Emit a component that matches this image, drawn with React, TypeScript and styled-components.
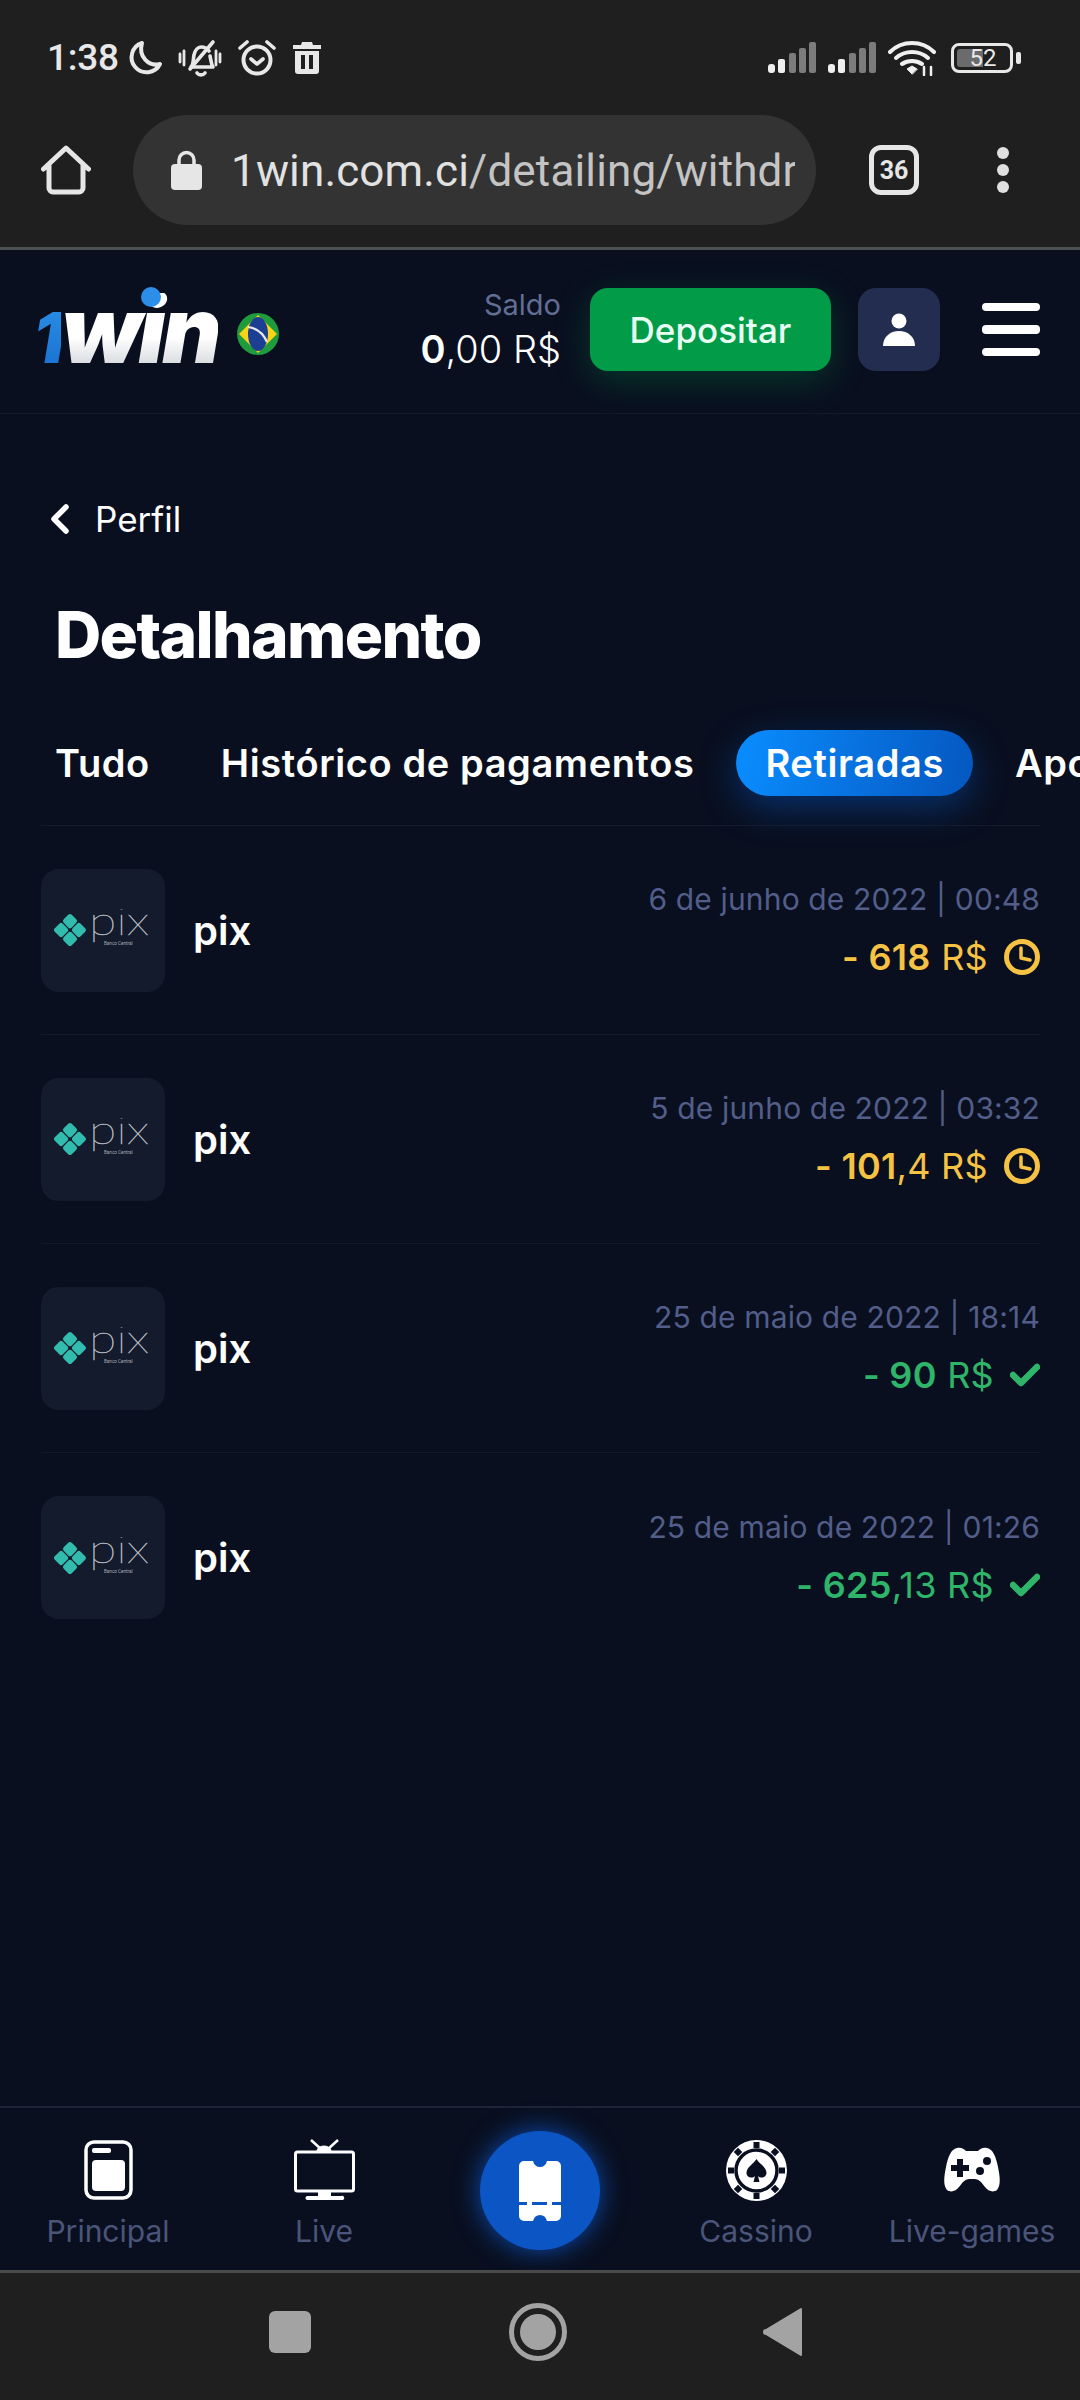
import styled, { createGlobalStyle } from "styled-components";

const GlobalStyle = createGlobalStyle`
  html, body {
    margin: 0;
    padding: 0;
    background: #090f1f;
  }
  * {
    box-sizing: border-box;
  }
`;

const Page = styled.div`
  width: 1080px;
  height: 2400px;
  display: flex;
  flex-direction: column;
  overflow: hidden;
  background: #090f1f;
  color: #fff;
  font-family: Inter, "Liberation Sans", sans-serif;
`;

const Chrome = styled.div`
  height: 250px;
  flex: none;
  background: #1f1f1f;
  border-bottom: 3px solid #4b5152;
  font-family: Roboto, "Liberation Sans", sans-serif;
`;
const StatusBar = styled.div`
  height: 115px;
  display: flex;
  align-items: center;
  padding: 0 67px 0 47px;
`;
const Time = styled.span`
  font-size: 37px;
  font-weight: 500;
  color: #e8e8e8;
  letter-spacing: -0.3px;
  margin-right: 8px;
`;
const StatusIcons = styled.div`
  display: flex;
  align-items: center;
  gap: 15px;
`;
const StatusRight = styled.div`
  margin-left: auto;
  display: flex;
  align-items: center;
`;
const SignalGroup = styled.svg`
  display: block;
  margin-right: 12px;
`;
const Battery = styled.div`
  position: relative;
  width: 62px;
  height: 30px;
  margin-left: 15px;
  border: 3px solid #e8e8e8;
  border-radius: 8px;
  display: flex;
  align-items: center;
  justify-content: center;
  font-size: 24px;
  color: #e8e8e8;
  padding-left: 2px;
  &::before {
    content: "";
    position: absolute;
    left: 3px;
    top: 3px;
    bottom: 3px;
    width: 26px;
    background: #6b6b6b;
    border-radius: 3px 0 0 3px;
  }
  &::after {
    content: "";
    position: absolute;
    right: -11px;
    top: 6px;
    width: 5px;
    height: 12px;
    background: #e8e8e8;
    border-radius: 2px;
  }
`;
const BatteryValue = styled.span`
  position: relative;
`;
const AddressRow = styled.div`
  height: 132px;
  display: flex;
  align-items: flex-start;
  padding-left: 41px;
`;
const HomeSlot = styled.div`
  width: 92px;
  padding-top: 30px;
`;
const UrlPill = styled.div`
  width: 683px;
  height: 110px;
  border-radius: 55px;
  background: #333333;
  display: flex;
  align-items: center;
  padding: 0 21px 0 38px;
`;
const UrlText = styled.div`
  margin: 2px 0 0 29px;
  flex: 1;
  overflow: hidden;
  white-space: nowrap;
  font-size: 44px;
  color: #c4c4c4;
  letter-spacing: 0.15px;
`;
const UrlHost = styled.span`
  color: #e2e2e2;
`;
const TabCount = styled.div`
  width: 50px;
  height: 50px;
  margin: 30px 0 0 53px;
  border: 5px solid #e6e6e6;
  border-radius: 12px;
  display: flex;
  align-items: center;
  justify-content: center;
  font-size: 25px;
  font-weight: 700;
  color: #e6e6e6;
`;
const MenuDots = styled.div`
  margin: 32px 0 0 78px;
  display: flex;
  flex-direction: column;
  gap: 5px;
  & > span {
    width: 12px;
    height: 12px;
    border-radius: 50%;
    background: #e0e0e0;
  }
`;

const Header = styled.header`
  height: 164px;
  flex: none;
  display: flex;
  align-items: center;
  padding: 0 40px 4px 33px;
  border-bottom: 1px solid #141a2c;
`;
const Logo = styled.div`
  position: relative;
  display: flex;
  align-items: baseline;
  height: 74px;
  font-size: 92px;
  line-height: 74px;
  font-weight: 900;
  font-style: italic;
  letter-spacing: -3.500px;
`;
const LogoOne = styled.span`
  font-size: 70px;
  background: linear-gradient(180deg, #2a8fe6, #1a6fd0);
  -webkit-background-clip: text;
  background-clip: text;
  color: transparent;
`;
const LogoWord = styled.span`
  background: linear-gradient(180deg, #ffffff 60%, #d6d8dd 100%);
  -webkit-background-clip: text;
  background-clip: text;
  color: transparent;
`;
const LogoDot = styled.span`
  position: absolute;
  left: 108px;
  top: -6px;
  width: 20px;
  height: 20px;
  border-radius: 50%;
  background: #2b8ee8;
`;
const Flag = styled.svg`
  margin-left: 19px;
  margin-top: 8px;
`;
const Balance = styled.div`
  margin-left: auto;
  text-align: right;
`;
const BalanceLabel = styled.div`
  font-size: 29px;
  line-height: 34px;
  color: #626e94;
`;
const BalanceValue = styled.div`
  margin-top: 4px;
  font-size: 38px;
  line-height: 46px;
  font-weight: 300;
  color: #fff;
  & > b {
    font-weight: 600;
  }
`;
const DepositButton = styled.div`
  width: 241px;
  height: 83px;
  margin-left: 29px;
  border-radius: 18px;
  background: #029c49;
  box-shadow: 0 10px 34px rgba(2, 156, 73, 0.28);
  display: flex;
  align-items: center;
  justify-content: center;
  font-size: 35px;
  font-weight: 500;
  color: #eafff3;
`;
const UserButton = styled.div`
  width: 82px;
  height: 83px;
  margin-left: 27px;
  border-radius: 18px;
  background: #232d4f;
  display: flex;
  align-items: center;
  justify-content: center;
`;
const Burger = styled.div`
  width: 58px;
  margin-left: 42px;
  display: flex;
  flex-direction: column;
  gap: 14px;
  & > span {
    height: 8.5px;
    border-radius: 4px;
    background: #fff;
  }
`;

const Main = styled.main`
  flex: 1;
  min-height: 0;
`;
const BackLink = styled.div`
  display: flex;
  align-items: center;
  gap: 25px;
  padding: 84px 0 0 50px;
  font-size: 35px;
  line-height: 42px;
`;
const Title = styled.h1`
  margin: 57px 0 0 55px;
  font-size: 64px;
  line-height: 76px;
  font-weight: 800;
  letter-spacing: -1.650px;
`;
const Tabs = styled.div`
  display: flex;
  gap: 13px;
  margin-top: 57px;
  padding-left: 26px;
  white-space: nowrap;
`;
const Tab = styled.div<{ $active?: boolean }>`
  flex: none;
  height: 66px;
  padding: 0 29px;
  border-radius: 33px;
  display: flex;
  align-items: center;
  font-size: 38px;
  font-weight: 600;
  letter-spacing: 0.6px;
  background: ${(p) =>
    p.$active ? "linear-gradient(100deg, #0a8dff, #0557c0)" : "transparent"};
  box-shadow: ${(p) => (p.$active ? "0 12px 36px rgba(7, 98, 220, 0.4)" : "none")};
`;
const List = styled.div`
  margin: 29px 40px 0 41px;
  border-top: 1px solid #141a2c;
`;
const Row = styled.div`
  height: 209px;
  display: flex;
  align-items: center;
  gap: 28px;
  border-bottom: 1px solid #141a2c;
  &:last-child {
    border-bottom: 0;
  }
`;
const MethodBox = styled.div`
  width: 124px;
  height: 123px;
  flex: none;
  border-radius: 18px;
  background: #141b2d;
  display: flex;
  align-items: center;
  justify-content: center;
`;
const MethodName = styled.div`
  font-size: 40px;
  font-weight: 600;
`;
const RowInfo = styled.div`
  margin-left: auto;
  text-align: right;
  margin-top: -3px;
`;
const DateText = styled.div`
  font-size: 30px;
  line-height: 38px;
  color: #525e89;
  letter-spacing: 0.15px;
`;
const Amount = styled.div<{ $tone: string }>`
  margin-top: 19px;
  height: 40px;
  display: flex;
  align-items: center;
  justify-content: flex-end;
  gap: 16px;
  font-size: 36px;
  color: ${(p) => p.$tone};
  letter-spacing: 0.3px;
  & b {
    font-weight: 600;
  }
`;

const BottomNav = styled.nav`
  height: 164px;
  flex: none;
  display: grid;
  grid-template-columns: repeat(5, 216px);
  border-top: 2px solid #1d2438;
`;
const NavItem = styled.div`
  display: flex;
  flex-direction: column;
  align-items: center;
  padding-top: 31px;
`;
const NavIcon = styled.div`
  height: 62px;
  display: flex;
  align-items: center;
  justify-content: center;
`;
const NavLabel = styled.div`
  margin-top: 12px;
  font-size: 30px;
  line-height: 36px;
  color: #4a5579;
  white-space: nowrap;
`;
const CenterButton = styled.div`
  width: 120px;
  height: 119px;
  margin: 23px auto 0;
  border-radius: 50%;
  background: #0c55c5;
  box-shadow: 0 0 26px rgba(14, 98, 230, 0.75);
  display: flex;
  align-items: center;
  justify-content: center;
`;
const SystemBar = styled.div`
  height: 130px;
  flex: none;
  display: flex;
  align-items: center;
  background: #1f1f1f;
  border-top: 3px solid #4a4a4a;
  padding: 0 0 10px 269px;
`;
const SystemSquare = styled.div`
  width: 42px;
  height: 42px;
  border-radius: 6px;
  background: #a3a3a3;
`;
const SystemCircle = styled.div`
  width: 58px;
  height: 58px;
  margin-left: 198px;
  border-radius: 50%;
  border: 5px solid #a3a3a3;
  display: flex;
  align-items: center;
  justify-content: center;
  &::after {
    content: "";
    width: 36px;
    height: 36px;
    border-radius: 50%;
    background: #a3a3a3;
  }
`;
const SystemBack = styled.svg`
  margin-left: 196px;
`;

const Signal = () => (
  <SignalGroup width="48" height="32" viewBox="0 0 48 32">
    <rect x="0" y="22" width="7" height="9" rx="3" fill="#eee" />
    <rect x="10" y="17" width="7" height="14" rx="2" fill="#eee" />
    <rect x="21" y="11" width="7" height="20" rx="2" fill="#7c7c7c" />
    <rect x="31" y="6" width="7" height="25" rx="2" fill="#7c7c7c" />
    <rect x="41" y="0" width="7" height="31" rx="2" fill="#7c7c7c" />
  </SignalGroup>
);

const PixLogo = () => (
  <svg width="98" height="42" viewBox="0 0 98 42">
    <g fill="#32bcad" transform="rotate(45 16 21)">
      <rect x="4" y="9" width="11.400" height="11.400" rx="2.500" />
      <rect x="16.600" y="9" width="11.400" height="11.400" rx="2.500" />
      <rect x="4" y="21.600" width="11.400" height="11.400" rx="2.500" />
      <rect x="16.600" y="21.600" width="11.400" height="11.400" rx="2.500" />
    </g>
    <text
      x="35"
      y="26"
      fontFamily="Lato, sans-serif"
      fontWeight="100"
      fontSize="40"
      fill="#b9bdc3"
      stroke="#b9bdc3"
      strokeWidth="0.4"
      textLength="60"
      lengthAdjust="spacingAndGlyphs"
    >
      pix
    </text>
    <text x="50" y="36" fontFamily="Roboto, sans-serif" fontSize="4.600" fill="#a6abb2">
      Banco Central
    </text>
  </svg>
);

const ClockIcon = () => (
  <svg width="36" height="36" viewBox="0 0 36 36" fill="none" stroke="#f6c244">
    <circle cx="18" cy="18" r="15.500" strokeWidth="5" />
    <path d="M17 9v10l9 2" strokeWidth="3.500" strokeLinecap="round" strokeLinejoin="round" />
  </svg>
);

const CheckIcon = () => (
  <svg width="30" height="26" viewBox="0 0 30 26" fill="none">
    <path d="M3 13l8 8L27 5" stroke="#2fb56a" strokeWidth="6.500" strokeLinecap="round" strokeLinejoin="round" />
  </svg>
);

const yellow = "#f6c244";
const green = "#2fb56a";

const rows = [
  { date: "6 de junho de 2022 | 00:48", whole: "- 618", rest: " R$", tone: yellow, done: false },
  { date: "5 de junho de 2022 | 03:32", whole: "- 101", rest: ",4 R$", tone: yellow, done: false },
  { date: "25 de maio de 2022 | 18:14", whole: "- 90", rest: " R$", tone: green, done: true },
  { date: "25 de maio de 2022 | 01:26", whole: "- 625", rest: ",13 R$", tone: green, done: true },
];

export default function App() {
  return (
    <Page>
      <GlobalStyle />
      <Chrome>
        <StatusBar>
          <Time>1:38</Time>
          <StatusIcons>
            <svg width="36" height="36" viewBox="0 0 36 36" fill="none">
              <path d="M15 3a15 15 0 1 0 18 21C22 27 11 17 15 3z" stroke="#e8e8e8" strokeWidth="4" strokeLinejoin="round" />
            </svg>
            <svg width="44" height="38" viewBox="0 0 44 38" fill="none" stroke="#e8e8e8" strokeWidth="3.600" strokeLinecap="round" strokeLinejoin="round">
              <path d="M13 28c3-3 2-8 3-12 1-5 4-8 7-8s6 1 8 4M32 17c1 4 1 8 3 11H13" />
              <path d="M12 30L35 3M19 34c2 2.500 6 2.500 8 0" />
              <path d="M2 15v8M6 12v14M38 12v14M42 15v8" strokeWidth="2.800" />
            </svg>
            <svg width="40" height="38" viewBox="0 0 40 38" fill="none" stroke="#e8e8e8" strokeLinecap="round" strokeLinejoin="round">
              <circle cx="20" cy="21" r="13.500" strokeWidth="4" />
              <path d="M14 20l6 5 6-5M3 9l7-6M37 9l-7-6" strokeWidth="3.600" />
            </svg>
            <svg width="30" height="32" viewBox="0 0 30 32" fill="#e8e8e8">
              <path d="M10 0h10l1 3h8v4H1V3h8zM3 9h24v20a3 3 0 0 1-3 3H6a3 3 0 0 1-3-3zM9 13v14h4V13zm8 0v14h4V13z" fillRule="evenodd" />
            </svg>
          </StatusIcons>
          <StatusRight>
            <Signal />
            <Signal />
            <svg width="48" height="36" viewBox="0 0 48 36" fill="none" stroke="#f0f0f0" strokeLinecap="round">
              <path d="M2 12c12-12 32-12 44 0M8 18c9-8 23-8 32 0M14 24c6-4 14-4 20 0" strokeWidth="4" />
              <path d="M24 34l-5-5 5-3 5 3z" fill="#f0f0f0" strokeWidth="1" />
              <path d="M36 27v8M43 27v8" strokeWidth="2.500" />
            </svg>
            <Battery>
              <BatteryValue>52</BatteryValue>
            </Battery>
          </StatusRight>
        </StatusBar>
        <AddressRow>
          <HomeSlot>
            <svg width="50" height="50" viewBox="0 0 50 50" fill="none">
              <path d="M2.500 24L25 3l22.500 21M8 19v24a4 4 0 0 0 4 4h26a4 4 0 0 0 4-4V19" stroke="#e6e6e6" strokeWidth="5" strokeLinecap="round" strokeLinejoin="round" />
            </svg>
          </HomeSlot>
          <UrlPill>
            <svg width="31" height="40" viewBox="0 0 31 40">
              <path d="M8 16v-6a7.500 7.500 0 0 1 15 0v6" fill="none" stroke="#e6e6e6" strokeWidth="3.500" />
              <rect x="0" y="14" width="31" height="26" rx="4" fill="#e6e6e6" />
            </svg>
            <UrlText>
              <UrlHost>1win.com.ci</UrlHost>/detailing/withdrawals
            </UrlText>
          </UrlPill>
          <TabCount>36</TabCount>
          <MenuDots>
            <span />
            <span />
            <span />
          </MenuDots>
        </AddressRow>
      </Chrome>

      <Header>
        <Logo>
          <LogoOne>1</LogoOne>
          <LogoWord>win</LogoWord>
          <LogoDot />
        </Logo>
        <Flag width="42" height="42" viewBox="0 0 42 42">
          <circle cx="21" cy="21" r="21" fill="#1f9a3c" />
          <path d="M21 2l19 19-19 19L2 21z" fill="#f7d516" />
          <ellipse cx="21" cy="21" rx="10" ry="17" fill="#1c3f94" />
          <path d="M11 14c8 1 15 6 19 15" stroke="#e8e8e8" strokeWidth="2.200" fill="none" />
        </Flag>
        <Balance>
          <BalanceLabel>Saldo</BalanceLabel>
          <BalanceValue>
            <b>0</b>,00 R$
          </BalanceValue>
        </Balance>
        <DepositButton>Depositar</DepositButton>
        <UserButton>
          <svg width="32" height="34" viewBox="0 0 32 34" fill="#fff">
            <circle cx="16" cy="8" r="7.500" />
            <path d="M0 33c0-9 7-15 16-15s16 6 16 15z" />
          </svg>
        </UserButton>
        <Burger>
          <span />
          <span />
          <span />
        </Burger>
      </Header>

      <Main>
        <BackLink>
          <svg width="20" height="30" viewBox="0 0 20 30" fill="none">
            <path d="M16 3L4 15l12 12" stroke="#fff" strokeWidth="5.500" strokeLinecap="round" strokeLinejoin="round" />
          </svg>
          Perfil
        </BackLink>
        <Title>Detalhamento</Title>
        <Tabs>
          <Tab>Tudo</Tab>
          <Tab>Histórico de pagamentos</Tab>
          <Tab $active>Retiradas</Tab>
          <Tab>Apostas</Tab>
        </Tabs>
        <List>
          {rows.map((row) => (
            <Row key={row.date}>
              <MethodBox>
                <PixLogo />
              </MethodBox>
              <MethodName>pix</MethodName>
              <RowInfo>
                <DateText>{row.date}</DateText>
                <Amount $tone={row.tone}>
                  <span>
                    <b>{row.whole}</b>
                    {row.rest}
                  </span>
                  {row.done ? <CheckIcon /> : <ClockIcon />}
                </Amount>
              </RowInfo>
            </Row>
          ))}
        </List>
      </Main>

      <BottomNav>
        <NavItem>
          <NavIcon>
            <svg width="49" height="60" viewBox="0 0 49 60" fill="none">
              <rect x="2" y="2" width="45" height="56" rx="8" stroke="#fff" strokeWidth="3.500" />
              <rect x="8" y="8" width="19" height="5" rx="2" fill="#fff" />
              <rect x="8" y="20" width="33" height="31" rx="4" fill="#fff" />
            </svg>
          </NavIcon>
          <NavLabel>Principal</NavLabel>
        </NavItem>
        <NavItem>
          <NavIcon>
            <svg width="61" height="62" viewBox="0 0 61 62" fill="none" stroke="#fff">
              <rect x="1.500" y="13" width="58" height="39" rx="2" strokeWidth="3" />
              <path d="M17 1l11 10M44 1L33 11" strokeWidth="2.500" />
              <path d="M23 12a7 5 0 0 1 14 0z" fill="#fff" strokeWidth="1" />
              <path d="M24 53h13v4H24zM14 57h33a2 2 0 0 1 2 4H13a2 2 0 0 1 1-4z" fill="#fff" strokeWidth="0" />
            </svg>
          </NavIcon>
          <NavLabel>Live</NavLabel>
        </NavItem>
        <div>
          <CenterButton>
            <svg width="42" height="60" viewBox="0 0 42 60">
              <path d="M5 0h9c1 4 3.500 6 7 6s6-2 7-6h9a5 5 0 0 1 5 5v50a5 5 0 0 1-5 5h-9c-1-4-3.500-6-7-6s-6 2-7 6H5a5 5 0 0 1-5-5V5a5 5 0 0 1 5-5z" fill="#fff" />
              <path d="M0 42.500h8M13 42.500h15M33 42.500h9" stroke="#0c55c5" strokeWidth="3" />
            </svg>
          </CenterButton>
        </div>
        <NavItem>
          <NavIcon>
            <svg width="61" height="61" viewBox="0 0 61 61">
              <circle cx="30.500" cy="30.500" r="30.500" fill="#fff" />
              <circle cx="30.500" cy="30.500" r="20.500" fill="none" stroke="#090f1f" strokeWidth="3.500" />
              <g fill="#090f1f">
                <rect x="27.500" y="2" width="6" height="6" />
                <rect x="27.500" y="53" width="6" height="6" />
                <rect x="2" y="27.500" width="6" height="6" />
                <rect x="53" y="27.500" width="6" height="6" />
                <rect x="9" y="9" width="6" height="6" transform="rotate(45 12 12)" />
                <rect x="46" y="9" width="6" height="6" transform="rotate(45 49 12)" />
                <rect x="9" y="46" width="6" height="6" transform="rotate(45 12 49)" />
                <rect x="46" y="46" width="6" height="6" transform="rotate(45 49 49)" />
                <path d="M30.500 19c3 5 10 8 10 14 0 4.500-6 6-8.500 3l1.500 6h-6l1.500-6c-2.500 3-8.500 1.500-8.500-3 0-6 7-9 10-14z" />
              </g>
            </svg>
          </NavIcon>
          <NavLabel>Cassino</NavLabel>
        </NavItem>
        <NavItem>
          <NavIcon>
            <svg width="58" height="46" viewBox="0 0 58 46">
              <path d="M14 1c4-1 7 1 9 3h12c2-2 5-4 9-3 6 1 9 9 11 19 2 10 3 18-1 23-4 3-9 1-12-3l-4-5q-3-3-6-3h-6q-3 0-6 3l-4 5c-3 4-8 6-12 3-4-5-3-13-1-23C5 10 8 2 14 1z" fill="#fff" />
              <path d="M14 12h6v6h6v6h-6v6h-6v-6H8v-6h6z" fill="#090f1f" />
              <circle cx="44" cy="14" r="4" fill="#090f1f" />
              <circle cx="37" cy="24" r="4" fill="#090f1f" />
            </svg>
          </NavIcon>
          <NavLabel>Live-games</NavLabel>
        </NavItem>
      </BottomNav>

      <SystemBar>
        <SystemSquare />
        <SystemCircle />
        <SystemBack width="40" height="50" viewBox="0 0 40 50">
          <path d="M38 2v46L3 27a2 2 0 0 1 0-4z" fill="#a3a3a3" stroke="#a3a3a3" strokeWidth="2" strokeLinejoin="round" />
        </SystemBack>
      </SystemBar>
    </Page>
  );
}
